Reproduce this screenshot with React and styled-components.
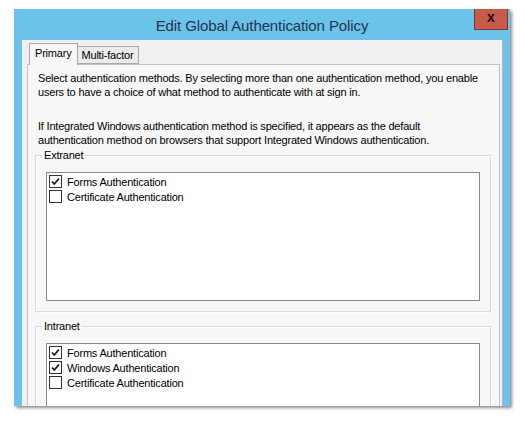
import React from 'react'
import styled, { createGlobalStyle } from 'styled-components'

const Global = createGlobalStyle`
  html, body {
    margin: 0;
    padding: 0;
    background: #ffffff;
  }
  body {
    font-family: "Liberation Sans", Arial, sans-serif;
  }
`

const extranet = [
  { label: 'Forms Authentication', checked: true },
  { label: 'Certificate Authentication', checked: false },
]

const intranet = [
  { label: 'Forms Authentication', checked: true },
  { label: 'Windows Authentication', checked: true },
  { label: 'Certificate Authentication', checked: false },
]

const Check = ({ checked }) => (
  <Box>
    {checked && (
      <svg width="11" height="11" viewBox="0 0 11 11">
        <path d="M2 5.5 L4.3 8 L9 2.5" fill="none" stroke="#1a1a1a" strokeWidth="1.8" />
      </svg>
    )}
  </Box>
)

const Group = ({ title, items, height }) => (
  <Fieldset>
    <Legend>{title}</Legend>
    <ListBox height={height}>
      {items.map((it) => (
        <Item key={it.label}>
          <Check checked={it.checked} />
          <span>{it.label}</span>
        </Item>
      ))}
    </ListBox>
  </Fieldset>
)

const App = () => {
  return (
    <Stage>
      <Global />
      <Window>
        <TitleBar>
          <Title>Edit Global Authentication Policy</Title>
          <Close>x</Close>
        </TitleBar>
        <Body>
          <Tabs>
            <Tab active>Primary</Tab>
            <Tab>Multi-factor</Tab>
          </Tabs>
          <Page>
            <Para>
              Select authentication methods. By selecting more than one authentication method, you enable
              <br />
              users to have a choice of what method to authenticate with at sign in.
            </Para>
            <Para gap>
              If Integrated Windows authentication method is specified, it appears as the default
              <br />
              authentication method on browsers that support Integrated Windows authentication.
            </Para>
            <Group title="Extranet" items={extranet} height={129} />
            <Group title="Intranet" items={intranet} height={90} />
          </Page>
        </Body>
      </Window>
    </Stage>
  )
}

export default App

const Stage = styled.div`
  width: 525px;
  height: 429px;
  overflow: hidden;
  padding: 9px 0 0 14px;
  box-sizing: border-box;
`

const Window = styled.div`
  width: 496px;
  height: 397px;
  background: #6cc3ea;
  display: flex;
  flex-direction: column;
  box-shadow: 2px 2px 3px rgba(0, 0, 0, 0.45);
  overflow: hidden;
`

const TitleBar = styled.div`
  position: relative;
  height: 31px;
  flex-shrink: 0;
  display: flex;
  align-items: center;
  justify-content: center;
`

const Title = styled.div`
  font-size: 15px;
  letter-spacing: -0.1px;
  color: #1c3550;
  margin-top: 2px;
`

const Close = styled.div`
  position: absolute;
  top: 0;
  right: 2px;
  width: 32px;
  height: 20px;
  background: #c75a4a;
  border: 1px solid #7a3a30;
  border-top: none;
  color: #1a0a08;
  font-weight: bold;
  font-size: 14px;
  line-height: 17px;
  text-align: center;
`

const Body = styled.div`
  flex: 1;
  margin: 0 7px 0 8px;
  background: #f0f0f0;
  border-right: 1px solid #b8b8b8;
  display: flex;
  flex-direction: column;
  padding-top: 3px;
`

const Tabs = styled.div`
  display: flex;
  align-items: flex-end;
  padding-left: 7px;
  height: 21px;
  position: relative;
  z-index: 1;
`

const Tab = styled.div`
  box-sizing: border-box;
  padding: ${({ active }) => (active ? '3px 5px 0' : '2px 4px 0')};
  font-size: 11px;
  letter-spacing: -0.2px;
  color: #000;
  background: ${({ active }) => (active ? '#f7f7f7' : '#ececec')};
  border: 1px solid #a9a9a9;
  border-bottom: ${({ active }) => (active ? 'none' : '1px solid #a9a9a9')};
  border-left: ${({ active }) => (active ? '1px solid #a9a9a9' : 'none')};
  margin-bottom: ${({ active }) => (active ? '-1px' : '0')};
  height: ${({ active }) => (active ? '22px' : '18px')};
`

const Page = styled.div`
  flex: 1;
  margin: 0 2px 0 5px;
  background: #f7f7f7;
  border: 1px solid #c4c4c4;
  border-bottom: none;
  padding: 6px 8px 0 7px;
`

const Para = styled.p`
  margin: ${({ gap }) => (gap ? '20px 0 0' : '0')};
  padding-left: 3px;
  font-size: 11px;
  letter-spacing: -0.2px;
  line-height: 14px;
  color: #000;
  white-space: nowrap;
`

const Fieldset = styled.fieldset`
  margin: 1px 0 7px;
  padding: 10px;
  border: 1px solid #dadada;
  box-shadow: inset 1px 1px 0 #ffffff, 1px 1px 0 #ffffff;
  min-width: 0;
`

const Legend = styled.legend`
  font-size: 11px;
  letter-spacing: -0.2px;
  line-height: 14px;
  padding: 0 2px;
  margin-left: -4px;
  color: #000;
`

const ListBox = styled.div`
  height: ${({ height }) => height}px;
  box-sizing: border-box;
  background: #ffffff;
  border: 1px solid #8a8a8a;
  padding: 1px 2px;
`

const Item = styled.div`
  display: flex;
  align-items: center;
  gap: 5px;
  height: 15px;
  font-size: 11px;
  letter-spacing: -0.2px;
  color: #000;
`

const Box = styled.div`
  width: 13px;
  height: 13px;
  box-sizing: border-box;
  border: 1px solid #333;
  background: #fff;
  display: flex;
  align-items: center;
  justify-content: center;
`
